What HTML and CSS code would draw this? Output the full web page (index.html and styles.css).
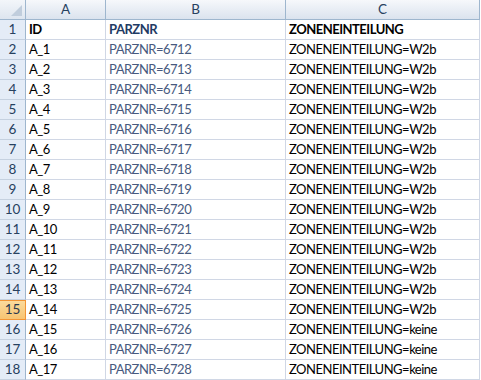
FILE: index.html
```html
<!DOCTYPE html>
<html lang="de">
<head>
    <meta charset="UTF-8">
    <title>Tabelle</title>
    <link rel="stylesheet" href="styles.css">
</head>
<body>
    <div class="sheet">
        <div class="corner"><span class="tri"></span></div>
        <div class="colhead">A</div>
        <div class="colhead">B</div>
        <div class="colhead">C</div>
    </div>
    <div class="sheet" id="rows"></div>

    <script>
    // Zeilen der Tabelle erzeugen
    const rows = document.getElementById("rows");
    let html = `
        <div class="rowhead">1</div>
        <div class="cell bold">ID</div>
        <div class="cell bold blue">PARZNR</div>
        <div class="cell bold">ZONENEINTEILUNG</div>`;
    for (let i = 2; i <= 18; i++) {
        const zone = i <= 15 ? "W2b" : "keine";
        html += `
        <div class="rowhead${i === 15 ? " active" : ""}">${i}</div>
        <div class="cell">A_${i - 1}</div>
        <div class="cell blue-light">PARZNR=${6710 + i}</div>
        <div class="cell">ZONENEINTEILUNG=${zone}</div>`;
    }
    rows.innerHTML = html;
    </script>
</body>
</html>
```

FILE: styles.css
```css
body {
    margin: 0;
    background-color: #fff;
    font-family: Lato, "Liberation Sans", sans-serif;
    font-size: 13px;
    letter-spacing: -0.5px;
    color: #000;
    overflow: hidden;
}

.sheet {
    display: grid;
    grid-template-columns: 26px 80px 180px 194px;
}

.corner {
    height: 19px;
    background: linear-gradient(#f3f6fa, #dde5ef);
    border-right: 1px solid #9eb6ce;
    border-bottom: 1px solid #9eb6ce;
    position: relative;
}

.corner .tri {
    position: absolute;
    right: 3px;
    bottom: 3px;
    width: 0;
    height: 0;
    border-left: 11px solid transparent;
    border-bottom: 11px solid #c0cddc;
}

.colhead {
    height: 19px;
    line-height: 19px;
    text-align: center;
    font-size: 13.5px;
    letter-spacing: 0;
    color: #27415f;
    background: linear-gradient(#f6f8fb, #dbe3ee);
    border-right: 1px solid #9eb6ce;
    border-bottom: 1px solid #9eb6ce;
}

.rowhead {
    height: 19px;
    line-height: 19px;
    text-align: center;
    font-size: 13.5px;
    letter-spacing: 0;
    color: #27415f;
    background-color: #e4ecf7;
    border-right: 1px solid #9eb6ce;
    border-bottom: 1px solid #c5d1e0;
}

.rowhead.active {
    background: linear-gradient(#fbdc9f, #f7c472);
    border-right-color: #f29536;
    border-bottom-color: #f29536;
    box-shadow: inset 0 1px 0 #f29536;
    color: #2b3a4d;
}

.cell {
    height: 19px;
    line-height: 19px;
    padding-left: 3px;
    border-right: 1px solid #d0d7e5;
    border-bottom: 1px solid #d0d7e5;
    white-space: nowrap;
    overflow: hidden;
}

.bold {
    font-weight: bold;
}

.blue {
    color: #1f3b64;
}

.blue-light {
    color: #475a7e;
}
```
